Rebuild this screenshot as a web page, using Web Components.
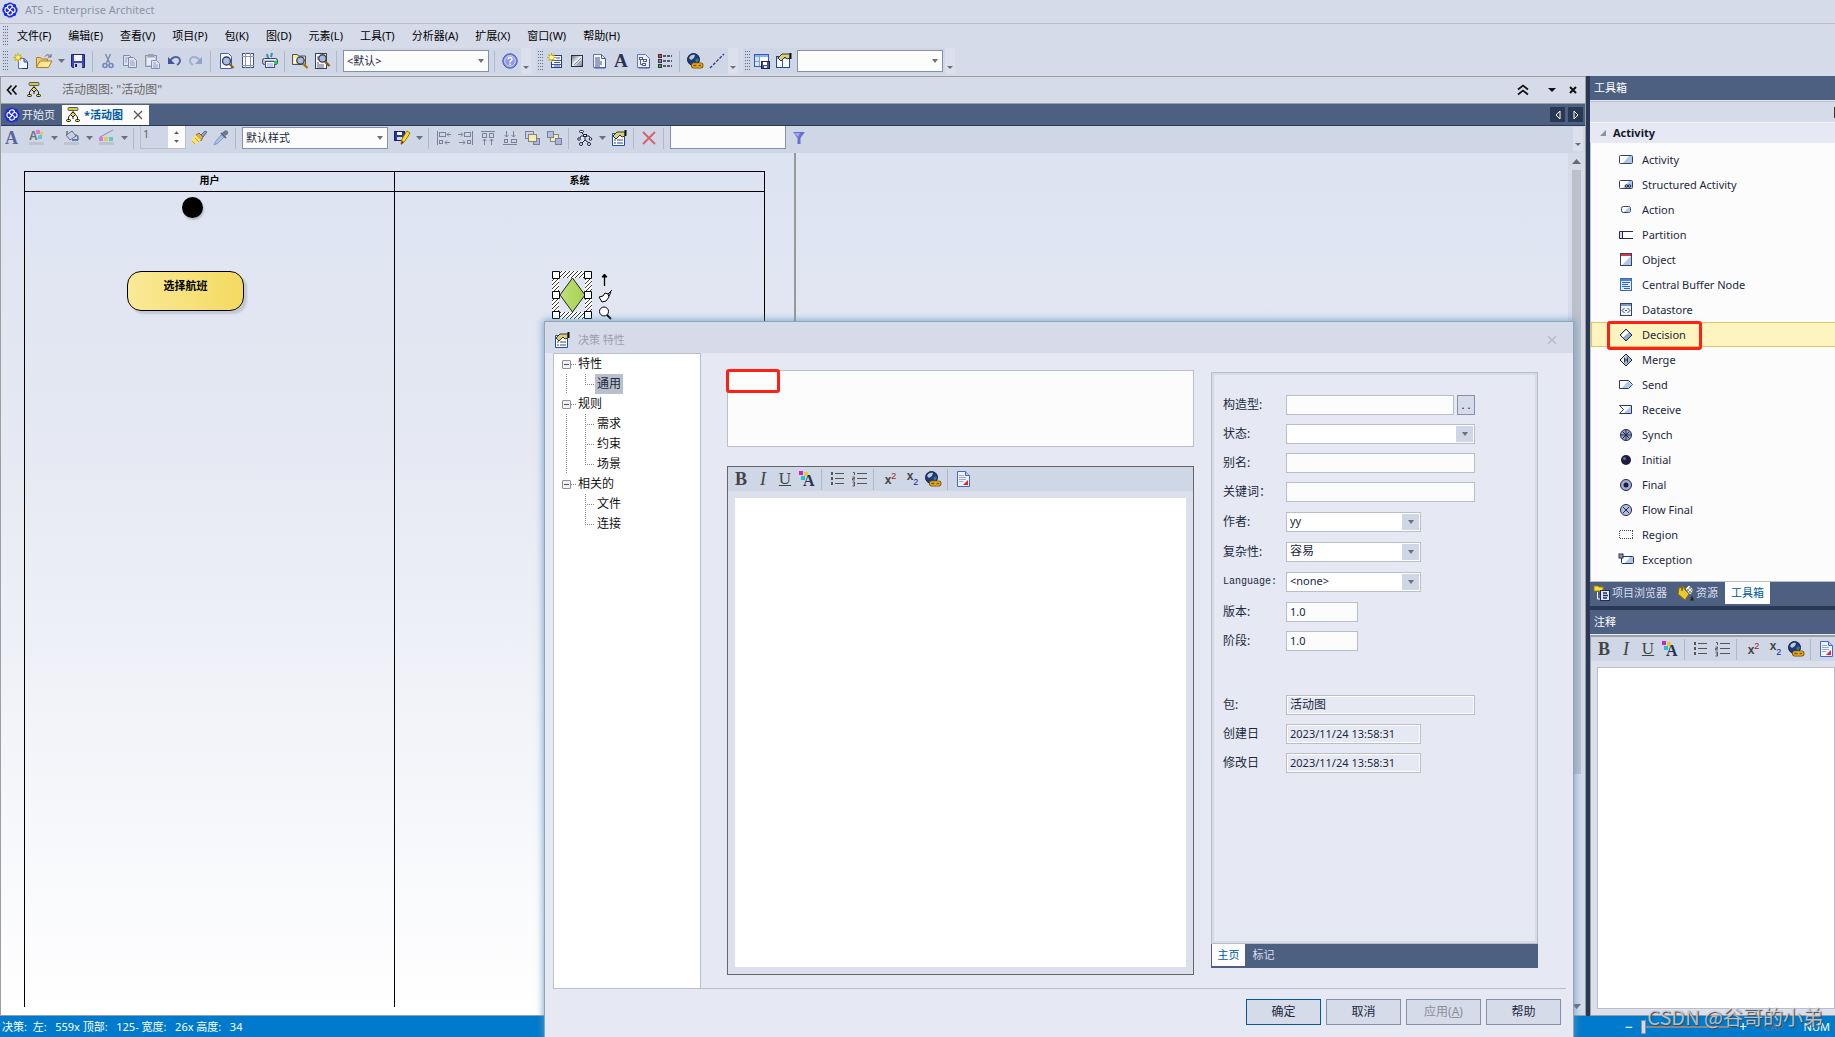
<!DOCTYPE html>
<html lang="zh-CN">
<head>
<meta charset="utf-8">
<title>ATS - Enterprise Architect</title>
<style>
:root{
  --chrome:#d6dbe9; --bar:#cfd6e5; --chip:#dcdfec; --body:#e6e9f3; --slate:#4d6082; --navy:#293955;
  --line:#b9bec9; --edge:#9b9fa0; --ink:#1b293e; --accent:#005a9e; --status:#007acc;
}
html,body{margin:0;height:100%;overflow:hidden}
body{font:11px/16px "Noto Sans","Noto Sans CJK SC",sans-serif;color:#111;background:var(--chrome)}
</style>
</head>
<body>
<ea-app></ea-app>

<script>
const ICONS = {
  logo:`<g fill="#1d2be0"><circle cx="8" cy="8" r="6"/><circle cx="8" cy="3.6" r="3.2"/><circle cx="8" cy="12.4" r="3.2"/><circle cx="3.6" cy="8" r="3.2"/><circle cx="12.4" cy="8" r="3.2"/><circle cx="4.4" cy="4.4" r="2.6"/><circle cx="11.6" cy="4.4" r="2.6"/><circle cx="4.4" cy="11.6" r="2.6"/><circle cx="11.6" cy="11.6" r="2.6"/></g><g fill="none" stroke="#fff" stroke-width="1.2"><path d="M8 8C5 7 4.500 3.500 7.500 3S11 5 9.500 5.500"/><path d="M8 8C9 5 12.500 4.500 13 7.500S11 11 10.500 9.500"/><path d="M8 8C11 9 11.500 12.500 8.500 13S5 11 6.500 10.500"/><path d="M8 8C7 11 3.500 11.500 3 8.500S5 5 5.500 6.500"/></g>`,
  activity:`<g stroke="#222" fill="none"><path d="M8 4.500L3.500 10M8 4.500L12.500 10M3.500 10v2M12.500 10v2M8 10v2"/></g><rect x="3" y=".5" width="10" height="3" rx="1" fill="#d8cf20" stroke="#557"/><path d="M8 5l2.500 2.500L8 10 5.500 7.500z" fill="#e8e02a" stroke="#222"/><g fill="#e8e02a" stroke="#222"><rect x="1.500" y="12.500" width="4" height="2" rx="1"/><rect x="10.500" y="12.500" width="4" height="2" rx="1"/></g>`,
  'new':`<path d="M5.500 5.500h6l3 3v7h-9z" fill="#eef3ff" stroke="#5a6cb0"/><path d="M11 5.500v3.500h3.500" fill="#9fb2e0" stroke="#3e4f96"/><path d="M9 15.500h5.500V9" fill="none" stroke="#28366f"/><path d="M5 0v9M.5 4.500h9M2 1.500l6 6M8 1.500l-6 6" stroke="#d0b000" stroke-width="1.300"/><circle cx="5" cy="4.500" r="2" fill="#fff27a"/>`,
  open:`<path d="M.5 14.500v-10h4l1 1.500h6v2" fill="#f0d070" stroke="#b07e20"/><path d="M.5 14.500l3.500-6.500h12l-3.500 6.500z" fill="#ffe79a" stroke="#b07e20"/><path d="M9 3.500c2-2.500 4-2 5 0M15 1v3h-3" fill="none" stroke="#5a5f6e"/>`,
  save:`<path d="M1.500 1.500h13v13h-12l-1-1z" fill="#3b49b4" stroke="#1d2562"/><rect x="4" y="2" width="8" height="6" fill="#f2f5ff"/><rect x="4" y="10" width="8" height="5" fill="#cdd4ea"/><rect x="5" y="11" width="2" height="3" fill="#1d2562"/>`,
  cut:`<g fill="none" stroke="#7d8aa8" stroke-width="1.400"><path d="M5.500 1l4 9M10.500 1l-4 9"/></g><g fill="none" stroke="#6f86c0" stroke-width="1.600"><circle cx="5" cy="12.500" r="2"/><circle cx="11" cy="12.500" r="2"/></g>`,
  copy:`<g fill="#dfe4f2" stroke="#7f8bad"><path d="M1.500 2.500h6l2 2v8h-8z"/><path d="M6.500 4.500h5l3 3v7h-8z"/></g><path d="M8 8h4M8 10h5M8 12h5M3 5h3M3 7h2M3 9h2" stroke="#8f9bc0"/>`,
  paste:`<rect x="1.500" y="2.500" width="11" height="11" fill="#c3c8d6" stroke="#8d95ab"/><rect x="4" y="1" width="6" height="3" fill="#9aa2b8"/><rect x="3" y="5" width="8" height="7" fill="#e8ecf6"/><path d="M7.500 7.500h5l3 3v5h-8z" fill="#e4e9f7" stroke="#7f90c0"/><path d="M9 10h3M9 12h5M9 14h5" stroke="#8f9bc0"/>`,
  undo:`<path d="M4 8c2-4 6-5 9-3 2 2.500 1 5-2 7" fill="none" stroke="#5264a8" stroke-width="2"/><path d="M2 4v7h7z" fill="#4254a0"/>`,
  redo:`<path d="M12 8c-2-4-6-5-9-3-2 2.500-1 5 2 7" fill="none" stroke="#9fb0cf" stroke-width="2"/><path d="M14 4v7h-7z" fill="#8ea4cc"/>`,
  preview:`<path d="M2.500.5h8l3 3v12h-11z" fill="#f7f9ff" stroke="#4a5cae"/><circle cx="8.500" cy="8" r="4" fill="#a9bddd" stroke="#333a55" stroke-width="1.300"/><path d="M11.500 11l4 4" stroke="#8a6018" stroke-width="2.200"/>`,
  pagesetup:`<rect x="2.500" y=".5" width="11" height="14" fill="#fbfcff" stroke="#46507a"/><path d="M5.500 0v15M10.500 0v15M2 3.500h12M2 12.500h12" stroke="#8a93b5"/>`,
  print:`<path d="M5 1l1 4M10 0l-1 4" stroke="#3b8ea0" stroke-width="2"/><rect x=".5" y="5.500" width="15" height="6" rx="2" fill="#b9c3cf" stroke="#3c4660"/><rect x="2" y="6" width="12" height="1" fill="#e8ecf2"/><rect x="3.500" y="8.500" width="9" height="6" fill="#fff" stroke="#3c4a90"/><rect x="12" y="8" width="3" height="3" fill="#20d840"/><path d="M5 11h6M5 13h6" stroke="#8a9ad0"/>`,
  find:`<path d="M.5 11.500v-10h5l1 1.500h7v8.500z" fill="#ffe890" stroke="#4a4f70"/><rect x="2" y="5" width="9" height="5" fill="#fffadf"/><circle cx="8.500" cy="7.500" r="3.700" fill="#a9bddd" stroke="#333a55" stroke-width="1.300"/><path d="M11 10.500l4.500 4.500" stroke="#a87410" stroke-width="2.400"/>`,
  search:`<rect x="1.500" y=".5" width="11" height="15" fill="#fbfcff" stroke="#39404f"/><path d="M3 4h2M3 6h2M3 10h2M3 12h7M3 14h7M6 2h5" stroke="#59617a"/><circle cx="8.500" cy="5.500" r="3.700" fill="#a9bddd" stroke="#333a55" stroke-width="1.300"/><path d="M11 8.500l4.500 4.500" stroke="#8a5a20" stroke-width="2.400"/>`,
  help:`<circle cx="8" cy="8" r="7.200" fill="#7f8bd8" stroke="#4b55b8"/><circle cx="8" cy="8" r="5.300" fill="#8d99e0" stroke="#d5dafa"/><path d="M6 6.500c0-3 4.500-2.500 4 0C9.500 8 8 7.500 8 9.500M8 10.500v1.500" fill="none" stroke="#fff" stroke-width="1.400"/>`,
  newelem:`<rect x="4.500" y="2.500" width="10" height="12" fill="#f4f7ff" stroke="#2f3c78"/><path d="M5 7.500h9M5 11.500h9M9 5h4M7 9.500h6M7 13h6" stroke="#4456a8"/><path d="M4.500 0v9M0 4.500h9M1.500 1.500l6 6M7.500 1.500l-6 6" stroke="#d0b000" stroke-width="1.200"/><circle cx="4.500" cy="4.500" r="2" fill="#fff8b0"/>`,
  shade:`<defs><linearGradient id="s" x1="0" y1="0" x2="1" y2="1"><stop stop-color="#6c7283"/><stop offset=".5" stop-color="#eceff5"/><stop offset="1" stop-color="#6c7283"/></linearGradient></defs><rect x="2.500" y="2.500" width="11" height="11" fill="url(#s)" stroke="#2a3044"/><path d="M5 12l7-7M8 12l4-4" stroke="#8a90a0"/>`,
  note:`<path d="M2.500 1.500h8l4 4v9h-12z" fill="#f6f9ff" stroke="#6476b8"/><path d="M10.500 1.500v4h4M14.500 6v9h-11" fill="none" stroke="#4558a8"/><path d="M4 5h5M4 7h5M4 9h7M4 11h7M4 13h5" stroke="#3c4c88"/>`,
  textA:`<text x="1" y="14" font-family="Liberation Serif" font-weight="bold" font-size="19" fill="#2b3152">A</text>`,
  diagram:`<path d="M2.500 1.500h8l4 4v9h-12z" fill="#e9effc" stroke="#6476b8"/><path d="M14.500 6v9h-11" fill="none" stroke="#4558a8"/><g fill="#fff" stroke="#555c78"><rect x="4.500" y="4.500" width="3" height="2"/><rect x="8.500" y="6.500" width="3" height="2"/><rect x="7.500" y="10.500" width="3" height="2"/></g><path d="M5.500 7v4.500H7" fill="none" stroke="#555c78"/>`,
  legend:`<g stroke="#333"><rect x="1.500" y="1.500" width="3" height="3" fill="#f33"/><rect x="1.500" y="6.500" width="3" height="3" fill="#78f"/><rect x="1.500" y="11.500" width="3" height="3" fill="#3b3"/></g><path d="M6 3h9M6 8h9M6 13h9" stroke="#2c3040" stroke-width="1.500" stroke-dasharray="3 1"/>`,
  globe:`<circle cx="6.500" cy="6.500" r="6" fill="#1d3a80" stroke="#14204a"/><path d="M2 5c1-3 4-4 6-3L7 5 4 7z" fill="#bdd0c8"/><path d="M8 7l3-2 1 2-2 3z" fill="#3d7a88"/><g fill="none" stroke="#7a4c00" stroke-width="3"><rect x="5.500" y="11" width="5.500" height="3" rx="1.500"/><rect x="10" y="11" width="5" height="3" rx="1.500"/></g><g fill="none" stroke="#e8b020" stroke-width="1.300"><rect x="5.500" y="11" width="5.500" height="3" rx="1.500"/><rect x="10" y="11" width="5" height="3" rx="1.500"/></g>`,
  dashline:`<path d="M1 15L15 1" stroke="#26398c" stroke-width="1.300" stroke-dasharray="3 1.500"/>`,
  savewin:`<rect x=".5" y="1.500" width="14" height="12" fill="#fdfeff" stroke="#3458b4"/><path d="M1 2h13v2H1z" fill="#8cb0f0"/><path d="M1 4h4v9H1z" fill="#d5e3fb"/><path d="M5.500 2v11M1 8.500h4" stroke="#7ea0e0"/><rect x="7.500" y="8.500" width="8" height="7" fill="#46508c" stroke="#1e2450"/><rect x="9" y="9" width="4" height="3" fill="#fff"/><rect x="10" y="13" width="3" height="2" fill="#d8dcf0"/>`,
  propwin:`<rect x=".5" y="3.500" width="13" height="11" fill="#fdfeff" stroke="#24459c"/><path d="M1 4h12v2H1z" fill="#8cb0f0"/><path d="M6.500 6v9" stroke="#3458b4"/><path d="M2 5l4-4h8v4l-3 1-2-2-4 4z" fill="#d8cf7a" stroke="#3c3a20"/><path d="M14.500 0v6" stroke="#111" stroke-width="2"/>`,
  props:`<path d="M1.500 3.500h12v12h-12z" fill="#fdfeff" stroke="#1f4fae"/><path d="M3 10h2M3 13h2M6 10h6M6 13h6" stroke="#3a4a80" stroke-width="1.200"/><path d="M2 6l4-4h8v4l-3 1-2-2-4 4z" fill="#d8cf7a" stroke="#3c3a20"/><path d="M14.500 0v6" stroke="#111" stroke-width="2"/>`,
  fontA:`<text x="1" y="14" font-family="Liberation Serif" font-weight="bold" font-size="18" fill="#5b649c">A</text>`,
  fontcolor:`<text x="0" y="10" font-family="Liberation Sans" font-weight="bold" font-size="12" fill="#6a7284">A</text><g><rect x="7" y="0" width="4" height="4" fill="#e07ad0"/><rect x="11" y="2" width="3" height="3" fill="#d8cf60"/><rect x="9" y="5" width="4" height="4" fill="#60c8c8"/></g><rect x="0" y="12" width="15" height="3" fill="#bfc3ca"/>`,
  fill:`<path d="M2 5l6-4 4 5-6 4z" fill="#c8cede" stroke="#66708c"/><path d="M3 5V1M11 5c3 0 3 2 3 5" fill="none" stroke="#66708c" stroke-width="1.500"/><path d="M8 10h6" stroke="#5c7ac0" stroke-width="2"/><rect x="0" y="12" width="15" height="3" fill="#bfc3ca"/>`,
  linecolor:`<path d="M1 7L14 0" stroke="#8a90a0"/><rect x="0" y="7" width="4" height="4" fill="#e07ad0"/><rect x="5" y="7" width="4" height="4" fill="#d8cf60"/><rect x="10" y="7" width="4" height="4" fill="#60c8c8"/><rect x="0" y="12" width="15" height="3" fill="#bfc3ca"/>`,
  brush:`<path d="M10 5l4-4 2 1-4 5z" fill="#8fa0cc" stroke="#5a6890"/><path d="M5 5l3-2 4 4-2 4z" fill="#d8ae58" stroke="#8a6a28"/><path d="M1 9l4-4 5 5-4 3-5 1z" fill="#f5e472"/><path d="M1 11l3 3M4 8l4 4" stroke="#c0a030"/>`,
  dropper:`<path d="M11 1c2-2 5 0 4 3l-3 2-3-3z" fill="#6f7890"/><path d="M8 3l5 5" stroke="#4e566e" stroke-width="1.500"/><path d="M8 5l3 2-6 6-4 2 2-4z" fill="#a9c4e8" stroke="#7f98c0"/>`,
  savestyle:`<rect x=".5" y="1.500" width="10" height="9" fill="#2b37a0" stroke="#181e60"/><rect x="3" y="2" width="5" height="3" fill="#fff"/><rect x="3" y="7" width="5" height="3" fill="#d6daf0"/><path d="M7 14l1-5 5-8 3 2-5 8z" fill="#ffe020" stroke="#a07000"/><path d="M7 15l1-4 2 1z" fill="#802020"/>`,
  alignL:`<g fill="none" stroke="#7b8296"><path d="M1.500 1v14"/><rect x="3.500" y="2.500" width="6" height="4"/><rect x="3.500" y="10.500" width="3" height="3"/><path d="M15 4.500h-4M13 2.500l-2 2 2 2M14 12.500H9M11 10.500l-2 2 2 2"/></g>`,
  alignR:`<g fill="none" stroke="#7b8296"><path d="M14.500 1v14"/><rect x="6.500" y="2.500" width="6" height="4"/><rect x="9.500" y="10.500" width="3" height="3"/><path d="M0 4.500h4M3 2.500l2 2-2 2M1 12.500h6M5 10.500l2 2-2 2"/></g>`,
  alignT:`<g fill="none" stroke="#7b8296"><path d="M1 1.500h14"/><rect x="2.500" y="3.500" width="4" height="4"/><rect x="9.500" y="3.500" width="4" height="4"/><path d="M4.500 15V9M2.500 11l2-2 2 2M11.500 15V9M9.500 11l2-2 2 2"/></g>`,
  alignB:`<g fill="none" stroke="#7b8296"><path d="M1 14.500h14"/><rect x="2.500" y="9.500" width="3" height="3"/><rect x="9.500" y="9.500" width="5" height="3"/><path d="M4.500 1v6M2.500 5l2 2 2-2M11.500 1v6M9.500 5l2 2 2-2"/></g>`,
  front:`<rect x="1.500" y="1.500" width="8" height="7" fill="#c6cfe8" stroke="#75809e"/><rect x="9.500" y="8.500" width="6" height="6" fill="#a9b4de" stroke="#75809e"/><rect x="4.500" y="4.500" width="8" height="7" fill="#f4eaba" stroke="#8a8468"/>`,
  back:`<rect x="4.500" y="4.500" width="8" height="7" fill="#f4eaba" stroke="#8a8468"/><rect x="1.500" y="1.500" width="6" height="6" fill="#b5bede" stroke="#75809e"/><rect x="9.500" y="8.500" width="6" height="6" fill="#a9b4de" stroke="#75809e"/>`,
  layout:`<g fill="#fff" stroke="#1d2140"><path d="M5 3l3 3M8 6H4l-2 4M8 6h4l2 3M8 6v4l-3 3M8 10l4 3"/><rect x="2.500" y=".5" width="4" height="2" rx="1"/><rect x="6.500" y="4.500" width="3" height="2"/><circle cx="2" cy="9" r="1.300"/><circle cx="13.500" cy="9" r="1.300"/><circle cx="4" cy="14" r="1.500"/><circle cx="12" cy="14" r="1.500"/></g>`,
  del:`<path d="M2 2l12 12M14 2L2 14" stroke="#d4606a" stroke-width="1.800"/>`,
  filter:`<path d="M2 2h12L9.500 8v6h-3V8z" fill="#6a6fd0"/><path d="M3 3h6L7 7z" fill="#a5a9ec"/>`,
  richA:`<rect x="0" y="0" width="4" height="4" fill="#d020c8"/><rect x="5" y="1" width="4" height="4" fill="#e0cf30"/><rect x="2" y="5" width="4" height="4" fill="#20c4cc"/><text x="4" y="15" font-family="Liberation Serif" font-weight="bold" font-size="16" fill="#2b3152">A</text>`,
  bullets:`<g fill="#555"><rect x="2" y="1" width="2" height="3"/><rect x="2" y="6" width="2" height="3"/><rect x="2" y="11" width="2" height="3"/></g><path d="M6 2.500h9M6 7.500h9M6 12.500h9" stroke="#555"/>`,
  numbers:`<path d="M2 1.500h1.500V4M1.500 6h2v1.500h-2V9h2.500M1.500 11h2v4h-2M2 13h1.500" fill="none" stroke="#555"/><path d="M6 2.500h10M6 7.500h10M6 12.500h10" stroke="#555"/>`,
  doc:`<path d="M2.500.5h8l4 4v11h-12z" fill="#eef4ff" stroke="#4466c8"/><path d="M10.500.5v4h4" fill="#b8cbf4" stroke="#4466c8"/><path d="M4 4.500h5M4 6.500h7M4 8.500h7M4 10.500h4" stroke="#9aaade"/><path d="M8 14l5-5v5z" fill="#e22"/>`,
  tActivity:`<rect x="1.500" y="3.500" width="13" height="8" rx="1" fill="#fff" stroke="#3a3d5c"/><path d="M5 11l6-7h3v7z" fill="#abc8ee"/>`,
  tStruct:`<rect x="1.500" y="3.500" width="13" height="8" rx="1" fill="#fff" stroke="#3a3d5c"/><path d="M5 11l6-7h3v7z" fill="#abc8ee"/><g fill="none" stroke="#1c1f3c"><circle cx="8.500" cy="9" r="1.300"/><circle cx="11.500" cy="9" r="1.300"/></g>`,
  tAction:`<rect x="3.500" y="4.500" width="9" height="6" rx="2" fill="#fff" stroke="#3a3d5c"/><path d="M6 10l5-5h1v5z" fill="#abc8ee"/>`,
  tPartition:`<path d="M15 4.500H1.500v7H15M4.500 4.500v7" fill="none" stroke="#24274a"/><rect x="2" y="5" width="2" height="6" fill="#cfe0f8"/>`,
  tObject:`<rect x="2.500" y="1.500" width="11" height="12" fill="#fff" stroke="#3f3d63"/><path d="M4 13l9-9v9z" fill="#abc8ee"/><path d="M3 2h10v2H3z" fill="#cf3d48"/>`,
  tBuffer:`<rect x="2.500" y="1.500" width="11" height="12" fill="#dcebff" stroke="#3f68b8"/><path d="M3 3h10" stroke="#4d80d4" stroke-width="2"/><path d="M4 5.500h8M4 7.500h6M4 9.500h8M6 11.500h6" stroke="#2f64bc"/>`,
  tData:`<rect x="2.500" y="1.500" width="11" height="12" fill="#f0f6ff" stroke="#38406a"/><path d="M3 3h10" stroke="#8095c4" stroke-width="2"/><path d="M6.500 6L4 8.500 6.500 11M9.500 6L12 8.500 9.500 11M7 8.500h2" fill="none" stroke="#38406a"/>`,
  tDecision:`<path d="M8 2l6 6-6 6-6-6z" fill="#8aa9d0" stroke="#22264a"/><path d="M8 3l3 2.500-6 5L3 8z" fill="#fff"/>`,
  tMerge:`<path d="M8 2l6 6-6 6-6-6z" fill="#9fb6d4" stroke="#22264a"/><path d="M8 3L3 8l3 3z" fill="#fff"/><path d="M6.500 5.500v5M9.500 5.500v5M6.500 8h3" stroke="#333"/>`,
  tSend:`<path d="M1.500 3.500h9L14.500 7.500l-4 4h-9z" fill="#fff" stroke="#333660"/><path d="M4 11l6-7 4 4-4 3z" fill="#abc8ee"/>`,
  tReceive:`<path d="M1.500 3.500h12v8h-12l4-4z" fill="#fff" stroke="#333660"/><path d="M6 11l7-7v7z" fill="#abc8ee"/>`,
  tSynch:`<circle cx="8" cy="8" r="5.500" fill="#9aa3cc" stroke="#22264a"/><path d="M8 3v10M3 8h10M4.500 4.500l7 7M11.500 4.500l-7 7" stroke="#22264a"/>`,
  tInitial:`<circle cx="8" cy="8" r="5" fill="#1c1e3c"/><circle cx="6.500" cy="6.500" r="1.500" fill="#6a6fb0"/>`,
  tFinal:`<circle cx="8" cy="8" r="5.500" fill="#a3abd6" stroke="#22264a"/><circle cx="8" cy="8" r="2.500" fill="#1c1e3c"/>`,
  tFlow:`<circle cx="8" cy="8" r="5.500" fill="#b3c0e0" stroke="#22264a"/><path d="M5 5l6 6M11 5l-6 6" stroke="#22264a"/>`,
  tRegion:`<path d="M2 3.500h13M2 11.500h13M1.500 4v8M14.500 4v8" fill="none" stroke="#444a66" stroke-dasharray="1 1"/>`,
  tException:`<rect x="3.500" y="4.500" width="12" height="7" rx="1" fill="#fff" stroke="#2c2f55"/><path d="M7 11l5-6h3v6z" fill="#abc8ee"/><rect x="1" y="2" width="4" height="4" fill="#8f94c4" stroke="#2c2f55"/>`,
  browser:`<path d="M0 1h4l1 1h4v4H0z" fill="#ffe030" stroke="#a08000"/><path d="M3.500 7v7H7" fill="none" stroke="#fff"/><rect x="6.500" y="5.500" width="9" height="10" fill="#dfe6fa" stroke="#22285a"/><path d="M9 8h4M9 10.500h5M9 13h4" stroke="#22285a" stroke-width="1.500"/>`,
  resource:`<path d="M1 3l2-1 1 4 1-5 2 4 4 4-4 6-7-6z" fill="#ecc830" stroke="#8a6c00"/><path d="M7 4l4-4 5 5-4 5z" fill="#f0f0f0" stroke="#666"/><path d="M9 4l4 4M11 2l4 4M9 6l4-4M11 8l4-4" stroke="#999"/><path d="M12 15.500l2-5 2 5z" fill="#222"/>`,
  dblUp:`<path d="M3 7.500l5-4 5 4M3 12.500l5-4 5 4" fill="none" stroke="#111" stroke-width="1.700"/>`,
  dblLeft:`<path d="M7.500 3.500l-4 4.500 4 4.500M12.500 3.500l-4 4.500 4 4.500" fill="none" stroke="#111" stroke-width="1.700"/>`,
  down:`<path d="M4 6h8l-4 4z" fill="#111"/>`,
  cross:`<path d="M5 5l6 6M11 5l-6 6" stroke="#111" stroke-width="2"/>`,
  thin:`<path d="M4 4l8 8M12 4l-8 8" stroke="currentColor" stroke-width="1.200"/>`,
  triL:`<path d="M10 4v8L6 8z" fill="none" stroke="#fff"/>`,
  triR:`<path d="M6 4v8l4-4z" fill="none" stroke="#fff"/>`,
};

/* Registers an element whose open shadow root holds the given styles and markup. */
function component(tag, css, render){
  customElements.define(tag, class extends HTMLElement{
    constructor(){
      super();
      this.attachShadow({mode:'open'});
    }
    connectedCallback(){
      const t = document.createElement('template');
      const html = typeof render === 'function' ? render(n => this.getAttribute(n) || '', this) : render;
      t.innerHTML = `<style>*,::before,::after{box-sizing:border-box}button,input,select,textarea{font:inherit;color:inherit;margin:0;border-radius:0;outline:0}button{padding:0;border:0;background:none}${css}</style>${html}`;
      this.shadowRoot.replaceChildren(t.content.cloneNode(true));
    }
  });
}

component('ea-icon', `:host{display:block;width:16px;height:16px;flex:none}svg{display:block;width:100%;height:100%;overflow:visible}`,
  a => `<svg viewBox="0 0 16 16" aria-hidden="true">${ICONS[a('name')]}</svg>`);

component('ea-tool', `:host{display:flex;flex:none;height:24px}
  button{display:flex;align-items:center;justify-content:center;width:22px;height:100%}
  :host([menu]) button{width:24px}
  :host([menu])::after{content:"";align-self:center;width:7px;height:4px;margin:0 2px;background:#6d7079;clip-path:polygon(0 0,100% 0,50% 100%)}`,
  a => `<button type="button" aria-label="${a('icon')}"><ea-icon name="${a('icon')}"></ea-icon></button>`);

component('ea-sep', `:host{display:block;flex:none;width:8px;height:21px;padding:0 3px}i{display:block;width:1px;height:100%;background:#b3b9c7}`, `<i></i>`);

component('ea-overflow', `:host{display:flex;flex:none;width:10px;align-self:stretch;background:var(--chip);align-items:flex-end;justify-content:center}
  i{width:6px;height:3px;margin-bottom:5px;background:#6d7079;clip-path:polygon(0 0,100% 0,50% 100%)}`, `<i></i>`);

component('ea-grip', `:host{display:block;flex:none;width:5px;height:21px;background:repeating-linear-gradient(#0000 0 1px,var(--bar) 1px 3px),repeating-linear-gradient(90deg,#6a7080 0 1px,#0000 1px 2px)}`, ``);

component('ea-toolbar', `:host{display:flex;align-items:center;height:24px;background:var(--bar)}`, `<slot></slot>`);

component('ea-combo', `:host{display:block;position:relative;flex:none;width:146px;height:22px}
  select{appearance:none;display:block;width:100%;height:100%;padding:0 22px 0 3px;border:1px solid #8591a8;background:#fcfcfc;color:var(--ink)}
  i{position:absolute;right:5px;top:9px;width:6px;height:4px;background:#6d7079;clip-path:polygon(0 0,100% 0,50% 100%);pointer-events:none}`,
  a => `<select aria-label="${a('label')}"><option>${a('value')}</option></select><i></i>`);

component('ea-titlebar', `:host{display:flex;align-items:center;gap:7px;height:24px;padding:0 2px 3px;border-bottom:1px solid var(--line);color:#8b93a5}`,
  `<ea-icon name="logo"></ea-icon><span>ATS - Enterprise Architect</span>`);

component('ea-menubar', `:host{display:flex;align-items:center;height:24px;padding-left:3px}
  nav{display:flex;gap:17px;margin-left:9px}button{line-height:20px;color:#000;white-space:nowrap}`,
  () => `<ea-grip></ea-grip><nav>${['文件(F)','编辑(E)','查看(V)','项目(P)','包(K)','图(D)','元素(L)','工具(T)','分析器(A)','扩展(X)','窗口(W)','帮助(H)'].map(m => `<button type="button">${m}</button>`).join('')}</nav>`);

const tools = names => names.map(n => n === '|' ? '<ea-sep></ea-sep>' : n.endsWith('+') ? `<ea-tool menu icon="${n.slice(0,-1)}"></ea-tool>` : `<ea-tool icon="${n}"></ea-tool>`).join('');

component('ea-mainbar', `:host{display:flex;gap:5px;height:28px;padding:0 0 2px 1px}
  ea-toolbar{height:26px}ea-grip{margin:0 1px 0 2px}.first ea-grip{margin-right:2px}ea-combo{margin:0 2px}`,
  () => `<ea-toolbar class="first"><ea-grip></ea-grip>${tools(['new','open+','save','|','cut','copy','paste','undo','redo','|','preview','pagesetup','print','|','find','search','|'])}<ea-combo label="视图" value="&lt;默认&gt;"></ea-combo>${tools(['|','help'])}<ea-overflow></ea-overflow></ea-toolbar>
  <ea-toolbar><ea-grip></ea-grip>${tools(['newelem','shade','note','textA','diagram','legend','|','globe','dashline'])}<ea-overflow></ea-overflow></ea-toolbar>
  <ea-toolbar><ea-grip></ea-grip>${tools(['savewin','propwin'])}<ea-combo label="布局" value=""></ea-combo><ea-overflow></ea-overflow></ea-toolbar>`);

component('ea-diagrambar', `:host{display:flex;height:27px;background:var(--bar);padding-bottom:2px}
  ea-toolbar{flex:1;min-width:0}ea-combo{margin:0 2px}
  ea-tool:first-child{margin-right:2px}
  .spin{display:flex;align-self:flex-start;width:46px;height:23px;margin:0 2px;border:1px solid var(--line);border-top:0;background:#fcfcfc}
  .spin input{width:27px;border:0;background:var(--bar);color:#666;padding:0 2px 6px;line-height:16px}
  .spin div{flex:1;display:flex;flex-direction:column;align-items:center;justify-content:space-evenly}
  .spin i{width:5px;height:3px;background:#555;clip-path:polygon(0 0,100% 0,50% 100%)}.spin i:first-child{clip-path:polygon(0 100%,100% 100%,50% 0)}
  .filter{width:116px;height:23px;align-self:flex-start;margin:0 2px;border:1px solid #8591a8;border-top:0;background:#fcfcfc}
  .fill{flex:1}ea-overflow{margin:1px 2px 0 0}`,
  () => `<ea-toolbar>${tools(['fontA','fontcolor+','fill+','linecolor+','|'])}
  <span class="spin"><input type="text" value="1" aria-label="线宽"><div><i></i><i></i></div></span>
  ${tools(['brush','dropper','|'])}<ea-combo label="样式" value="默认样式"></ea-combo>${tools(['savestyle+','|','alignL','alignR','alignT','alignB','front','back','|','layout+','props','|','del','|'])}
  <input class="filter" type="text" aria-label="过滤">${tools(['filter'])}<span class="fill"></span></ea-toolbar><ea-overflow></ea-overflow>`);

component('ea-caption', `:host{display:flex;align-items:center;height:28px;padding:0 4px 0 3px;border:1px solid var(--edge);border-right:0;color:#6b6b6b;font-size:12px}
  .t{flex:1;margin-left:20px}.kind{margin-left:6px}.r{display:flex;gap:13px}.r ea-icon:last-child{margin-left:-8px}`,
  `<ea-icon name="dblLeft"></ea-icon><ea-icon name="activity" class="kind"></ea-icon><span class="t">活动图图: "活动图"</span><span class="r"><ea-icon name="dblUp"></ea-icon><ea-icon name="down"></ea-icon><ea-icon name="cross"></ea-icon></span>`);

component('ea-tabs', `:host{display:flex;align-items:flex-end;height:22px;background:var(--slate);border-bottom:1px solid var(--navy);color:#e8ecf5}
  button{display:flex;align-items:center;gap:2px;height:20px}
  .home{padding:0 7px 0 3px}
  .on{gap:3px;padding:0 3px;background:#fcfcfc;color:var(--accent);font-weight:bold}
  .on ea-icon:last-child{margin-left:4px;color:#555}
  .r{flex:1;display:flex;justify-content:flex-end;gap:3px;padding:0 2px 3px 0}.r button{width:15px;height:15px;background:var(--navy);justify-content:center}`,
  `<button type="button" class="home"><ea-icon name="logo"></ea-icon>开始页</button><button type="button" class="on"><ea-icon name="activity"></ea-icon>*活动图<ea-icon name="thin"></ea-icon></button>
  <span class="r"><button type="button" aria-label="上一个"><ea-icon name="triL"></ea-icon></button><button type="button" aria-label="下一个"><ea-icon name="triR"></ea-icon></button></span>`);

component('ea-canvas', `:host{flex:1;display:flex;min-height:0;border-bottom:1px solid var(--edge)}
  .paper{flex:1;position:relative;overflow:hidden;background:linear-gradient(#dce3f1,#e6e9f3 35%,#fff)}
  .page{position:absolute;left:0;top:0;bottom:0;width:795px;border-right:2px solid #999}
  .lanes{position:absolute;left:23px;top:18px;bottom:8px;width:741px;display:flex;border:1px solid #000;border-bottom:0}
  .lane{flex:1}.lane+.lane{border-left:1px solid #000}
  .lane b{display:block;height:20px;border-bottom:1px solid #000;font-size:10px;line-height:17px;text-align:center;color:#000}
  .start{position:absolute;left:181px;top:44px;width:21px;height:21px;border-radius:50%;background:#000;box-shadow:1px 2px 2px #0003}
  .act{position:absolute;left:126px;top:118px;width:117px;height:40px;border:1px solid #000;border-radius:14px;background:linear-gradient(90deg,#fae998,#f4da60);box-shadow:3px 3px 2px #0002;text-align:center;font-weight:bold;line-height:27px;color:#000}
  .dec{position:absolute;left:550px;top:117px;width:62px;height:50px;overflow:visible}
  .bar{width:17px;flex:none;display:flex;flex-direction:column;align-items:center;background:var(--chrome)}
  .bar i{width:9px;height:5px;margin:6px 0;background:#666a72;clip-path:polygon(0 0,100% 0,50% 100%)}
  .bar i:first-child{clip-path:polygon(0 100%,100% 100%,50% 0)}
  .bar div{flex:1;width:100%;padding:0 4px}.bar b{display:block;height:73%;background:#bcc0ca}`,
  `<div class="paper"><div class="page"></div>
    <div class="lanes"><div class="lane"><b>用户</b></div><div class="lane"><b>系统</b></div></div>
    <div class="start"></div><div class="act">选择航班</div>
    <svg class="dec" viewBox="0 0 62 50">
      <defs><pattern id="h" width="4" height="4" patternUnits="userSpaceOnUse"><rect width="4" height="4" fill="#fff"/><path d="M-1 5L5 -1M-1 1L1 -1M3 5L5 3" stroke="#222" stroke-width=".9"/></pattern>
      <linearGradient id="g"><stop stop-color="#bfe07a"/><stop offset="1" stop-color="#a5d24c"/></linearGradient></defs>
      <path fill="url(#h)" fill-rule="evenodd" d="M1 1h40v48H1zM8 8v34h26V8z"/>
      <path d="M21.500 8L34 25 21.500 42 9 25z" fill="url(#g)" stroke="#222"/>
      <g fill="#fff" stroke="#000"><path d="M1.500 1.500h7v7h-7zM33.500 1.500h7v7h-7zM1.500 21.500h7v7h-7zM33.500 21.500h7v7h-7zM1.500 41.500h7v7h-7zM33.500 41.500h7v7h-7z"/></g>
      <g fill="none" stroke="#000"><path d="M53.500 16V5" stroke-width="1.300"/><path d="M51 7l2.500-3L56 7z" fill="#000"/><path d="M48 27l4-1 2-3 3 1 1 3-3 4-4 1zM57 24l4-4M58 26l2-4" fill="#fff"/><circle cx="53" cy="41.500" r="4.500" fill="#fff"/><path d="M56 45l4 4" stroke-width="2"/></g>
    </svg></div>
  <div class="bar"><i></i><div><b></b></div><i></i></div>`);

component('ea-richbar', `:host{display:flex;align-items:center;height:24px;padding:0 0 0 2px;background:var(--bar);overflow:hidden;flex:none}
  button{width:22px;height:22px;flex:none;font:bold 18px/22px "Liberation Serif",serif;color:#444}
  .i{font-weight:normal;font-style:italic}.u{font-weight:normal;text-decoration:underline;font-size:17px}
  .x{display:flex;justify-content:center;align-items:flex-start;padding:4px 0 0 3px;font:bold 12px/14px "Liberation Sans",sans-serif}
  .x span{font-weight:normal;font-size:9px;line-height:10px}.up b{margin-top:1px}.up span{color:#a01818;margin-top:-1px}.dn b{margin-top:-3px}.dn span{color:#1820a0;margin-top:5px}`,
  () => `<button type="button">B</button><button type="button" class="i">I</button><button type="button" class="u">U</button>${tools(['richA','|','bullets','numbers','|'])}<button type="button" class="x up"><b>x</b><span>2</span></button><button type="button" class="x dn"><b>x</b><span>2</span></button>${tools(['globe','|','doc'])}`);

component('ea-editor', `:host{display:flex;flex-direction:column;min-height:0;background:#dcdfec}
  textarea{flex:1;min-height:0;margin:var(--inset,7px);resize:none;border:var(--tb,0);background:#fff;padding:2px}`,
  a => `<ea-richbar></ea-richbar><textarea aria-label="${a('label')}"></textarea>`);

component('ea-panel-title', `:host{display:block;flex:none;height:25px;padding:0 4px;background:var(--slate);color:#fff;line-height:24px;border-bottom:1px solid #e4e8f2}`, `<slot></slot>`);

component('ea-tool-item', `:host{display:block;height:25px}
  button{position:relative;display:flex;align-items:center;gap:8px;width:100%;height:100%;padding-left:27px;color:#1b293e;text-align:left;white-space:nowrap}
  :host([selected]) button{background:#fdf4bf;border:1px solid #e5c365;border-right:0;padding-left:26px}
  :host([selected]) button::after{content:"";position:absolute;left:15px;top:-2px;width:95px;height:29px;border:3px solid #ff1f15;border-radius:3px}`,
  a => `<button type="button"><ea-icon name="${a('icon')}"></ea-icon><slot></slot></button>`);

component('ea-toolbox', `:host{display:flex;flex-direction:column;flex:none;background:#fcfcfc}
  .find{display:flex;justify-content:flex-end;height:22px;border-top:1px solid var(--line);border-bottom:1px solid #f4f6fa;background:var(--chrome);overflow:hidden}
  .find i{width:1px;height:11px;margin-top:5px;background:#333}
  h3{display:flex;align-items:center;gap:7px;height:20px;margin:0;padding-left:10px;background:var(--body);font-size:11px;color:#111a2b}
  h3 i{width:6px;height:6px;background:#8a8f99;clip-path:polygon(100% 0,100% 100%,0 100%)}
  .list{padding:4px 0 9px;border-left:1px solid var(--line);border-bottom:1px solid var(--line)}
  .tabs{display:flex;align-items:flex-start;height:24px;background:var(--slate);color:#d9dfec}
  button{display:flex;align-items:center;gap:2px;height:22px;padding:0 4px}
  button:nth-child(2){padding:0 7px}
  .on{background:#fcfcfc;color:var(--accent);padding:0 6px}`,
  () => `<ea-panel-title>工具箱</ea-panel-title><div class="find"><i></i></div><h3><i></i>Activity</h3><div class="list">${
    [['tActivity','Activity'],['tStruct','Structured Activity'],['tAction','Action'],['tPartition','Partition'],['tObject','Object'],['tBuffer','Central Buffer Node'],['tData','Datastore'],['tDecision','Decision',1],['tMerge','Merge'],['tSend','Send'],['tReceive','Receive'],['tSynch','Synch'],['tInitial','Initial'],['tFinal','Final'],['tFlow','Flow Final'],['tRegion','Region'],['tException','Exception']]
    .map(([i,t,s]) => `<ea-tool-item icon="${i}"${s ? ' selected' : ''}>${t}</ea-tool-item>`).join('')}</div>
  <div class="tabs"><button type="button"><ea-icon name="browser"></ea-icon>项目浏览器</button><button type="button"><ea-icon name="resource"></ea-icon>资源</button><button type="button" class="on">工具箱</button></div>`);

component('ea-notes', `:host{display:flex;flex-direction:column;flex:1;min-height:0;margin-top:4px;overflow:hidden}
  ea-editor{flex:1;border:1px solid var(--edge);border-width:2px 0 1px 1px;--inset:6px 0 6px 6px;--tb:1px solid var(--line)}`,
  `<ea-panel-title>注释</ea-panel-title><ea-editor label="注释"></ea-editor>`);

component('ea-statusbar', `:host{display:flex;align-items:center;height:21px;flex:none;padding:0 5px 0 2px;background:var(--status);color:#fff;white-space:pre;line-height:21px}
  .m{flex:1}.z{display:flex;align-items:center;gap:4px}
  .z button{width:16px;height:18px;font-size:14px;line-height:18px}
  input{appearance:none;width:90px;height:14px;background:linear-gradient(#888,#888) 0 6px/100% 2px no-repeat}
  input::-webkit-slider-thumb{appearance:none;width:5px;height:14px;background:#d6dbe9;border:1px solid #8a93a8}
  .c{margin-left:12px;color:#5f7590}.n{margin-left:20px}`,
  `<span class="m">决策:  左:   559x 顶部:   125- 宽度:   26x 高度:   34</span><span class="z"><button type="button">−</button><input type="range" min="0" max="100" value="0" aria-label="缩放"><button type="button">+</button></span><span class="c">CAP</span><span class="n">NUM</span>`);

component('ea-tree', `:host{display:block;width:148px;flex:none;padding:0 0 0 8px;border:1px solid var(--line);border-bottom:0;background:#fff;font-size:12px;line-height:20px;color:#111}
  ul{margin:0;padding:0;list-style:none}
  .row{display:flex;align-items:center;height:20px;background:repeating-linear-gradient(90deg,#888 0 1px,#0000 1px 2px) 9px 10px/5px 1px no-repeat}
  .row span{margin-left:7px}
  .row i{width:9px;height:9px;border:1px solid #919191;border-radius:1px;background:linear-gradient(#3a50a0,#3a50a0) 1px 3px/5px 1px no-repeat,#f2f2f2}
  .kids{margin-left:4px;padding-left:19px;background:repeating-linear-gradient(#888 0 1px,#0000 1px 2px) 0 0/1px 100% no-repeat}
  .root>li:last-child>.kids{background:none}
  .kids li{height:20px;padding-left:10px;background:repeating-linear-gradient(#888 0 1px,#0000 1px 2px) 0 0/1px 100% no-repeat,repeating-linear-gradient(90deg,#888 0 1px,#0000 1px 2px) 0 10px/9px 1px no-repeat}
  .kids li:last-child{background-size:1px 10px,9px 1px}
  .kids span{display:inline-block;height:20px;padding:0 2px;line-height:19px}.on{background:#b9c0cc;color:var(--ink)}`,
  () => `<ul class="root">${[['特性',['通用']],['规则',['需求','约束','场景']],['相关的',['文件','连接']]].map(([g,k]) => `<li><div class="row"><i></i><span>${g}</span></div><ul class="kids">${k.map(x => `<li><span${x === '通用' ? ' class="on"' : ''}>${x}</span></li>`).join('')}</ul></li>`).join('')}</ul>`);

component('ea-field', `:host{display:flex;align-items:center;height:20px}
  label{width:63px;flex:none;font-size:12px;line-height:20px;color:var(--ink);white-space:nowrap}
  :host([latin]) label{font:10px/20px "Liberation Mono",monospace}
  .box{position:relative;display:flex;width:189px;height:20px}
  :host([size=m]) .box{width:135px}:host([size=s]) .box{width:72px}
  input,select{appearance:none;flex:1;min-width:0;width:100%;height:100%;padding:0 3px 2px;border:1px solid var(--line);background:#fcfcfc;color:var(--ink)}
  input[readonly]{background:var(--body);box-shadow:inset 0 0 0 1px #fff}
  select{background:#fff}
  .big{font-size:12px}
  .arrow{position:absolute;right:2px;top:2px;width:17px;height:16px;background:var(--bar);pointer-events:none}
  .arrow::after{content:"";position:absolute;left:6px;top:6px;width:6px;height:4px;background:#6d7079;clip-path:polygon(0 0,100% 0,50% 100%)}
  button{width:18px;margin-left:3px;border:1px solid #8591a8;background:var(--chrome);color:#111;line-height:16px;white-space:nowrap}`,
  a => {
    const v = a('value').replace('<','&lt;').replace('>','&gt;'), big = /[\u4e00-\u9fff]/.test(v) ? ' class="big"' : '';
    const kind = a('kind');
    return `<label for="f">${a('label')}</label><div class="box">${kind === 'select'
      ? `<select id="f"${big}><option>${v}</option></select><span class="arrow"></span>`
      : `<input id="f" type="text" value="${v}"${big}${kind === 'readonly' ? ' readonly' : ''}>${kind === 'browse' ? '<button type="button">. .</button>' : ''}`}</div>`;
  });

component('ea-form', `:host{display:flex;flex-direction:column;width:327px;flex:none}
  form{flex:1;margin:0;padding:22px 11px 0;border:1px solid var(--line);box-shadow:inset 0 0 0 2px var(--chrome);background:var(--body)}
  fieldset{display:flex;flex-direction:column;gap:9px;margin:0 0 10px;padding:0;border:0;min-width:0}
  fieldset.wide{gap:10px}fieldset.last{margin-top:44px}
  nav{display:flex;height:24px;background:var(--slate);padding:0 0 1px 1px}
  nav button{width:33px;height:22px;padding-bottom:1px;color:#d9dfec}nav .on{background:#fcfcfc;color:var(--accent)}nav button+button{margin-left:2px}`,
  `<form>
    <fieldset><ea-field label="构造型:" kind="browse"></ea-field><ea-field label="状态:" kind="select"></ea-field><ea-field label="别名:"></ea-field><ea-field label="关键词："></ea-field></fieldset>
    <fieldset class="wide"><ea-field label="作者:" kind="select" size="m" value="yy"></ea-field><ea-field label="复杂性:" kind="select" size="m" value="容易"></ea-field><ea-field latin label="Language:" kind="select" size="m" value="&lt;none&gt;"></ea-field></fieldset>
    <fieldset><ea-field label="版本:" size="s" value="1.0"></ea-field><ea-field label="阶段:" size="s" value="1.0"></ea-field></fieldset>
    <fieldset class="last"><ea-field label="包:" kind="readonly" value="活动图"></ea-field><ea-field label="创建日" kind="readonly" size="m" value="2023/11/24 13:58:31"></ea-field><ea-field label="修改日" kind="readonly" size="m" value="2023/11/24 13:58:31"></ea-field></fieldset>
  </form><nav><button type="button" class="on">主页</button><button type="button">标记</button></nav>`);

component('ea-dialog', `:host{display:flex;flex-direction:column;border:1px solid #93a3b8;border-bottom:0;background:var(--body);box-shadow:0 0 7px 1px #5f9ac0cc}
  header{display:flex;align-items:center;height:31px;padding:5px 13px 0 9px;gap:8px;background:var(--chrome);color:#9aa0ae}
  header span{flex:1}header ea-icon:last-child{color:#b5b8bf}
  .main{flex:1;display:flex;min-height:0;margin:0 7px 0 8px;border-bottom:1px solid var(--line)}
  .mid{flex:1;display:flex;flex-direction:column;min-width:0;margin:17px 17px 13px 26px}
  .name{position:relative;height:77px;flex:none}
  .name textarea{display:block;width:100%;height:100%;resize:none;border:1px solid var(--line);background:#fcfcfc}
  .name i{position:absolute;left:-1px;top:-1px;width:54px;height:24px;border:3px solid #ff1f15;border-radius:3px}
  ea-editor{flex:1;margin-top:19px;border:1px solid #666}
  ea-form{margin:19px 28px 20px 0}
  footer{display:flex;justify-content:flex-end;gap:5px;height:48px;padding:10px 12px 0 0}
  footer button{width:75px;height:26px;border:1px solid #8591a8;background:var(--chrome);color:var(--ink);font-size:12px}
  footer .ok{border-color:var(--accent)}footer button:disabled{color:#8b8f99}`,
  `<header><ea-icon name="props"></ea-icon><span>决策 特性</span><ea-icon name="thin"></ea-icon></header>
  <div class="main"><ea-tree></ea-tree><div class="mid"><div class="name"><textarea aria-label="名称"></textarea><i></i></div><ea-editor label="说明"></ea-editor></div><ea-form></ea-form></div>
  <footer><button type="button" class="ok">确定</button><button type="button">取消</button><button type="button" disabled>应用(<u>A</u>)</button><button type="button">帮助</button></footer>`);

component('ea-app', `:host{position:relative;display:flex;flex-direction:column;height:100vh;overflow:hidden}
  .work{flex:1;display:flex;min-height:0}
  .left{flex:1;display:flex;flex-direction:column;min-width:0;border-right:1px solid var(--edge)}
  .doc{flex:1;display:flex;flex-direction:column;min-height:0;border-left:1px solid var(--edge)}
  .right{width:249px;flex:none;display:flex;flex-direction:column;min-height:0;padding-left:4px;background:var(--navy);overflow:hidden}
  ea-dialog{position:absolute;left:544px;right:261px;top:321px;bottom:0}
  .mark{position:absolute;right:12px;bottom:6px;font:20px/28px "Noto Sans CJK SC",sans-serif;color:#d5d9dfcc;text-shadow:1px 1px 1px #444;white-space:nowrap;pointer-events:none}`,
  `<ea-titlebar></ea-titlebar><ea-menubar></ea-menubar><ea-mainbar></ea-mainbar>
  <div class="work"><div class="left"><ea-caption></ea-caption><div class="doc"><ea-tabs></ea-tabs><ea-diagrambar></ea-diagrambar><ea-canvas></ea-canvas></div></div>
  <div class="right"><ea-toolbox></ea-toolbox><ea-notes></ea-notes></div></div>
  <ea-statusbar></ea-statusbar><ea-dialog></ea-dialog><div class="mark">CSDN @谷哥的小弟</div>`);
</script>
</body>
</html>
